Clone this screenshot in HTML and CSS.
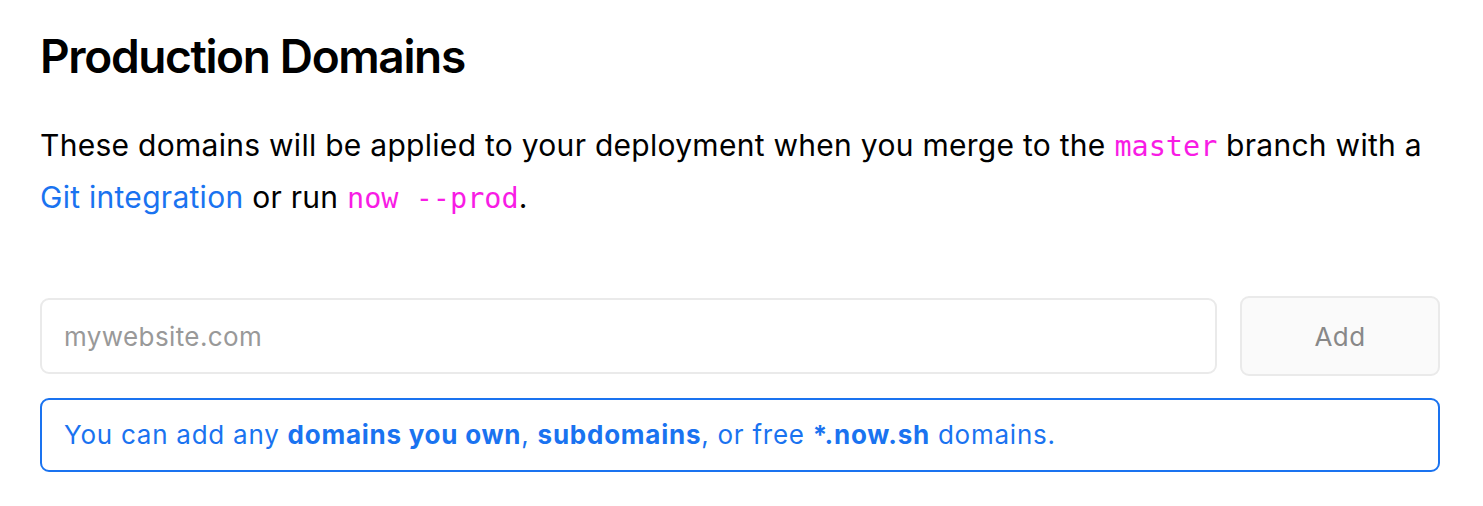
FILE: index.html
```html
<!DOCTYPE html>
<html>
<head>
<meta charset="utf-8">
<link rel="stylesheet" href="styles.css">
</head>
<body>
<section class="domains">
  <h1 class="title">Production Domains</h1>
  <p class="desc">These domains will be applied to your deployment when you merge to the <code class="code">master</code> branch with a <a class="link" href="#">Git integration</a> or run <code class="code">now --prod</code>.</p>
  <form class="add-row">
    <input class="domain-input" type="text" placeholder="mywebsite.com">
    <button class="add-btn" type="button">Add</button>
  </form>
  <p class="note">You can add any <b>domains you own</b>, <b>subdomains</b>, or free <b>*.now.sh</b> domains.</p>
</section>
</body>
</html>
```
FILE: styles.css
```css
html, body {
  margin: 0;
  padding: 0;
  background: #fff;
}
body {
  font-family: Inter, "Noto Sans", sans-serif;
  color: #000;
}
.domains {
  width: 1400px;
  padding: 24px 0 0 40px;
}
.title {
  margin: 0;
  font-size: 46px;
  font-weight: 600;
  letter-spacing: -1.35px;
  line-height: 64px;
}
.desc {
  margin: 32px 0 0;
  font-size: 30px;
  letter-spacing: 0.28px;
  line-height: 50px;
}
.code {
  font-family: "DejaVu Sans Mono", monospace;
  font-size: 28.5px;
  letter-spacing: 0;
  color: #f81ce5;
}
.link {
  color: #1a73f0;
  text-decoration: none;
}
.add-row {
  display: flex;
  gap: 23px;
  align-items: center;
  margin: 72px 0 0;
}
.domain-input {
  flex: 1;
  height: 76px;
  box-sizing: border-box;
  border: 2px solid #eaeaea;
  border-radius: 9px;
  padding: 0 22px;
  font-family: Inter, sans-serif;
  font-size: 26px;
  letter-spacing: 0.4px;
  color: #000;
  outline: none;
}
.domain-input::placeholder {
  color: #999;
}
.add-btn {
  width: 200px;
  height: 80px;
  box-sizing: border-box;
  border: 2px solid #eaeaea;
  border-radius: 9px;
  background: #fafafa;
  color: #888;
  font-family: Inter, sans-serif;
  font-size: 26px;
  letter-spacing: 0.4px;
}
.note {
  margin: 22px 0 0;
  box-sizing: border-box;
  height: 74px;
  border: 2px solid #1a73f0;
  border-radius: 9px;
  padding: 0 22px;
  color: #1a73f0;
  font-size: 26px;
  letter-spacing: 0.75px;
  line-height: 70px;
}
.note b {
  font-weight: 700;
}
```
